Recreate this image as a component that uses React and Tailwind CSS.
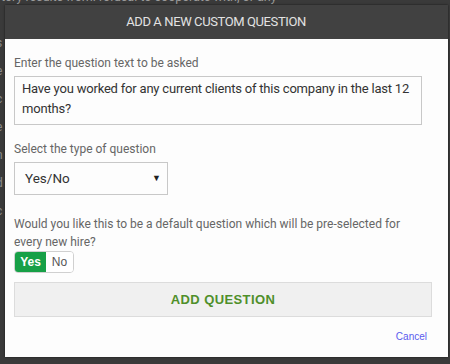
export default function App() {
  return (
    <div className="relative w-[450px] h-[364px] overflow-hidden bg-[#3a3a3a]" style={{ fontFamily: "Roboto, 'Liberation Sans', sans-serif" }}>
      <div className="absolute left-[1px] top-[-10px] text-[12.5px] leading-[14px] text-[#9a9a9a] whitespace-nowrap">tory results from: refusal to cooperate with, or any</div>
      <div className="absolute left-[-4px] top-[36px] flex flex-col gap-[14px] text-[12px] text-[#8a8a8a] leading-[14px]">
        <span>s</span><span>e</span><span>c</span><span>e</span><span>n</span><span>d</span><span>c</span>
      </div>
      <div className="relative pt-[5px] pl-[5px] pr-[2px]">
        <div className="w-[443px] h-[352px] flex flex-col bg-[#fdfdfd] shadow-[0_0_2px_rgba(0,0,0,0.6)]">
          <div className="h-[34px] shrink-0 bg-[#414141] flex items-center justify-center pr-[21px] text-[13px] tracking-[-0.4px] text-[#e2e2e2]">
            ADD A NEW CUSTOM QUESTION
          </div>
          <div className="flex flex-col pl-[9px] pr-[17px]">
            <div className="mt-[16px] text-[12px] leading-[16px] text-[#666]">Enter the question text to be asked</div>
            <div className="mt-[5px] w-[408px] h-[49px] border border-[#c8c8c8] pl-[7px] pr-[2px] pt-[2px] text-[13px] tracking-[-0.2px] leading-[20px] text-[#333] whitespace-nowrap overflow-hidden">
              Have you worked for any current clients of this company in the last 12<br />months?
            </div>
            <div className="mt-[16px] text-[12px] leading-[16px] text-[#666]">Select the type of question</div>
            <div className="mt-[5px] w-[154px] h-[33px] border border-[#c8c8c8] flex items-center justify-between pl-[10px] pr-[6px] text-[13.5px] text-[#333]">
              <span>Yes/No</span>
              <span className="text-[9px] text-[#222]">▼</span>
            </div>
            <div className="mt-[20px] text-[12px] leading-[18px] text-[#666]">
              Would you like this to be a default question which will be pre-selected for every new hire?
            </div>
            <div className="mt-[0px] flex w-[60px] h-[22px] rounded-[4px] border border-[#d0d0d0] overflow-hidden text-[12px]" style={{ fontFamily: "'Liberation Sans', Arial, sans-serif" }}>
              <div className="w-[31px] bg-[#17a047] text-white font-bold flex items-center justify-center">Yes</div>
              <div className="flex-1 bg-white text-[#555] flex items-center justify-center">No</div>
            </div>
            <div className="mt-[9px] w-[418px] h-[35px] bg-[#f0f0f0] border border-[#dcdcdc] flex items-center justify-center text-[13px] font-bold tracking-[0.4px] text-[#4f8f2a]" style={{ fontFamily: "'Liberation Sans', Arial, sans-serif" }}>
              ADD QUESTION
            </div>
            <div className="mt-[14px] flex justify-end pr-[4px]">
              <span className="text-[10px] leading-[12px] text-[#5a5aee]" style={{ fontFamily: "'Liberation Sans', Arial, sans-serif" }}>Cancel</span>
            </div>
          </div>
        </div>
      </div>
    </div>
  );
}
